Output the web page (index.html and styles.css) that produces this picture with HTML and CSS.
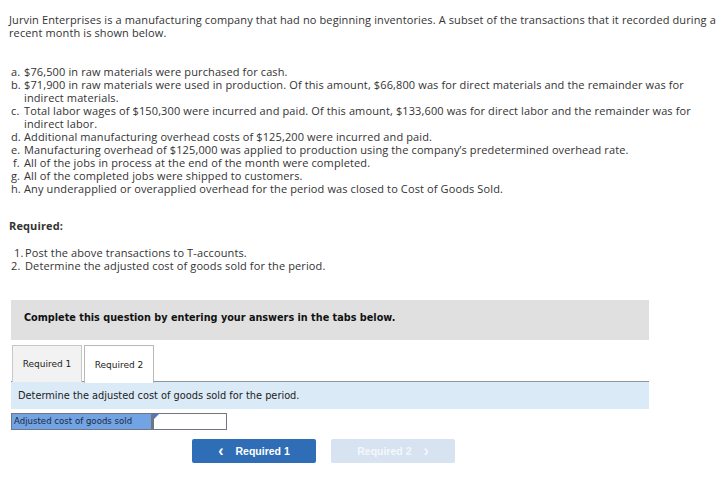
FILE: index.html
```html
<!DOCTYPE html>
<html>
<head>
<meta charset="utf-8">
<link rel="stylesheet" href="styles.css">
</head>
<body>
<div class="page">
  <p class="intro">Jurvin Enterprises is a manufacturing company that had no beginning inventories. A subset of the transactions that it recorded during a recent month is shown below.</p>
  <ol class="trans">
    <li><span class="mk">a.</span><span>$76,500 in raw materials were purchased for cash.</span></li>
    <li><span class="mk">b.</span><span>$71,900 in raw materials were used in production. Of this amount, $66,800 was for direct materials and the remainder was for indirect materials.</span></li>
    <li><span class="mk">c.</span><span>Total labor wages of $150,300 were incurred and paid. Of this amount, $133,600 was for direct labor and the remainder was for indirect labor.</span></li>
    <li><span class="mk">d.</span><span>Additional manufacturing overhead costs of $125,200 were incurred and paid.</span></li>
    <li><span class="mk">e.</span><span>Manufacturing overhead of $125,000 was applied to production using the company’s predetermined overhead rate.</span></li>
    <li><span class="mk mk-f">f.</span><span>All of the jobs in process at the end of the month were completed.</span></li>
    <li><span class="mk">g.</span><span>All of the completed jobs were shipped to customers.</span></li>
    <li><span class="mk">h.</span><span>Any underapplied or overapplied overhead for the period was closed to Cost of Goods Sold.</span></li>
  </ol>
  <p class="req-title">Required:</p>
  <ol class="req">
    <li><span class="mk mk-1">1.</span><span>Post the above transactions to T-accounts.</span></li>
    <li><span class="mk">2.</span><span>Determine the adjusted cost of goods sold for the period.</span></li>
  </ol>
</div>
<div class="panel">
  <div class="notice">Complete this question by entering your answers in the tabs below.</div>
  <div class="tabs">
    <div class="tab">Required 1</div>
    <div class="tab active">Required 2</div>
  </div>
  <div class="instr">Determine the adjusted cost of goods sold for the period.</div>
  <div class="answer">
    <div class="ans-label">Adjusted cost of goods sold</div>
    <div class="ans-input"><span class="corner"></span></div>
  </div>
  <div class="nav">
    <button class="btn prev"><span class="chev">&lsaquo;</span>Required 1</button>
    <button class="btn next">Required 2<span class="chev">&rsaquo;</span></button>
  </div>
</div>
</body>
</html>
```
FILE: styles.css
```css
* { box-sizing: border-box; }
html, body { margin: 0; padding: 0; background: #fff; }
body {
  width: 716px;
  color: #333;
  font-family: "Open Sans", "Liberation Sans", sans-serif;
  font-size: 11px;
  letter-spacing: 0.12px;
  line-height: 13px;
}
.page { padding: 13px 0 0 9px; }
.intro { margin: 0; width: 707px; }
ol { list-style: none; margin: 0; padding: 0; }
ol li { display: flex; }
.trans { margin-top: 26px; padding-left: 2px; width: 692px; }
.trans .mk { width: 13px; flex: none; }
.mk-f { padding-left: 2px; }
.req-title { margin: 24px 0 0 0; font-weight: 700; }
.req { margin-top: 14px; padding-left: 2px; }
.req .mk { width: 14px; flex: none; }
.mk-1 { padding-left: 3px; }

.panel { margin: 28px 0 0 11px; width: 638px; letter-spacing: 0; }
.notice {
  background: #e0e0e0;
  height: 40px;
  padding: 0 0 5px 13px;
  display: flex;
  align-items: center;
  font-family: "DejaVu Sans", Verdana, sans-serif;
  font-weight: 700;
  font-size: 9.7px;
  color: #111;
}
.tabs { display: flex; gap: 2px; margin-top: 5px; padding-left: 1px; height: 37px; }
.tab {
  width: 70px;
  height: 37px;
  border: 1px solid #c8c8c8;
  border-bottom: none;
  background: #f2f2f2;
  display: flex;
  align-items: center;
  justify-content: center;
  padding-top: 1px;
  font-family: "DejaVu Sans", Verdana, sans-serif;
  font-size: 9px;
  color: #222;
}
.tab.active { background: #fff; border-color: #b8b8b8; z-index: 1; margin-bottom: -1px; height: 38px; }
.instr {
  background: #dbeaf7;
  border-top: 1px solid #8e969c;
  height: 28px;
  padding-left: 7px;
  display: flex;
  align-items: center;
  font-family: "DejaVu Sans", Verdana, sans-serif;
  font-size: 9.8px;
  color: #222;
  margin-top: -1px;
}
.answer { display: flex; margin-top: 4px; height: 17px; }
.ans-label {
  width: 141px;
  background: #72a3e4;
  border: 1px solid #6f7680;
  padding-left: 2px;
  font-family: "DejaVu Sans", Verdana, sans-serif;
  font-size: 8.6px;
  line-height: 15px;
  color: #1b2a3a;
}
.ans-input {
  width: 75px;
  border: 1px solid #6f7680;
  border-left: 2px solid #6f7680;
  background: #fff;
  position: relative;
}
.corner {
  position: absolute;
  left: 0; top: 0;
  width: 0; height: 0;
  border-top: 5px solid #3f7bd0;
  border-right: 5px solid transparent;
}
.nav { display: flex; gap: 15px; margin: 9px 0 0 181px; }
.btn {
  width: 124px;
  height: 24px;
  border: none;
  border-radius: 2px;
  font-family: "Liberation Sans", Arial, sans-serif;
  font-weight: 700;
  font-size: 10.5px;
  color: #fff;
  display: flex;
  align-items: center;
  justify-content: center;
  padding: 0;
}
.prev { background: #2f6eb6; }
.next { background: #d7e3f1; color: #f4f7fb; }
.chev { font-size: 16px; font-weight: 700; line-height: 10px; }
.prev .chev { margin-right: 12px; }
.next .chev { margin-left: 12px; }
```
